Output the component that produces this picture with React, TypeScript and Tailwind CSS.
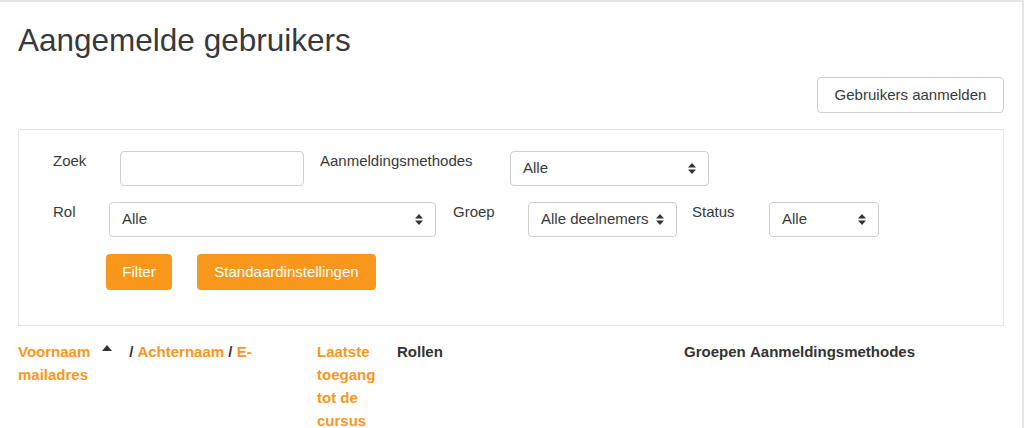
import React from "react";

const font = { fontFamily: '"Liberation Sans", Arial, Helvetica, sans-serif' };

function UpDown() {
  return (
    <svg width="8" height="11" viewBox="0 0 8 11" className="shrink-0">
      <path d="M4 0 L8 4.5 L0 4.5 Z" fill="#333" />
      <path d="M0 6.5 L8 6.5 L4 11 Z" fill="#333" />
    </svg>
  );
}

function Select({ value, width }: { value: string; width: string }) {
  return (
    <div
      className={`flex h-[35px] ${width} shrink-0 items-center justify-between rounded-[4px] border border-[#cfcfcf] bg-white pl-[12px] pr-[12px] text-[15px] text-[#373a3c]`}
    >
      <span>{value}</span>
      <UpDown />
    </div>
  );
}

export default function App() {
  return (
    <div
      style={font}
      className="h-[428px] w-[1024px] overflow-hidden border-t-2 border-r-2 border-[#e6e6e6] bg-white text-[15px] text-[#373a3c]"
    >
      <div className="px-[18px]">
        <h2 className="pt-[19px] text-[31.5px] leading-[38px] font-normal text-[#373a3c]">
          Aangemelde gebruikers
        </h2>

        <div className="mt-[18px] flex justify-end">
          <button className="h-[36px] w-[187px] rounded-[4px] border border-[#cfcfcf] bg-white text-[15px] text-[#373a3c]">
            Gebruikers aanmelden
          </button>
        </div>

        <div className="mt-[16px] w-[986px] border border-[#e3e3e3] bg-white pb-[35px] pl-[34px] pt-[21px]">
          <div className="flex items-start">
            <label className="w-[67px] shrink-0 leading-[20px]">Zoek</label>
            <div className="h-[35px] w-[184px] shrink-0 rounded-[4px] border border-[#cfcfcf] bg-white" />
            <label className="ml-[16px] w-[190px] shrink-0 leading-[20px]">Aanmeldingsmethodes</label>
            <Select value="Alle" width="w-[199px]" />
          </div>

          <div className="mt-[16px] flex items-start">
            <label className="w-[56px] shrink-0 leading-[20px]">Rol</label>
            <Select value="Alle" width="w-[327px]" />
            <label className="ml-[17px] w-[75px] shrink-0 leading-[20px]">Groep</label>
            <Select value="Alle deelnemers" width="w-[149px]" />
            <label className="ml-[15px] w-[77px] shrink-0 leading-[20px]">Status</label>
            <Select value="Alle" width="w-[110px]" />
          </div>

          <div className="mt-[17px] flex gap-[25px] pl-[53px]">
            <button className="h-[36px] w-[66px] rounded-[4px] bg-[#f7981d] text-[15px] text-white">
              Filter
            </button>
            <button className="h-[36px] w-[179px] rounded-[4px] bg-[#f7981d] text-[15px] text-white">
              Standaardinstellingen
            </button>
          </div>
        </div>

        <div className="mt-[14px] flex text-[15px] font-bold leading-[23px]">
          <div className="w-[299px] shrink-0">
            <div className="flex items-start">
              <span className="text-[#f7981d]">Voornaam</span>
              <svg width="10" height="6" viewBox="0 0 10 6" className="ml-[12px] mr-[17px] mt-[5px]">
                <path d="M5 0 L10 6 L0 6 Z" fill="#333" />
              </svg>
              <span className="text-[#333]">/ </span>
              <span className="ml-[4px] text-[#f7981d]">Achternaam</span>
              <span className="text-[#333]">&nbsp;/&nbsp;</span>
              <span className="text-[#f7981d]">E-</span>
            </div>
            <div className="text-[#f7981d]">mailadres</div>
          </div>
          <div className="w-[80px] shrink-0 text-[#f7981d]">
            Laatste
            <br />
            toegang
            <br />
            tot de
            <br />
            cursus
          </div>
          <div className="w-[287px] shrink-0 text-[#333]">Rollen</div>
          <div className="w-[66px] shrink-0 text-[#333]">Groepen</div>
          <div className="text-[#333]">Aanmeldingsmethodes</div>
        </div>
      </div>
    </div>
  );
}
